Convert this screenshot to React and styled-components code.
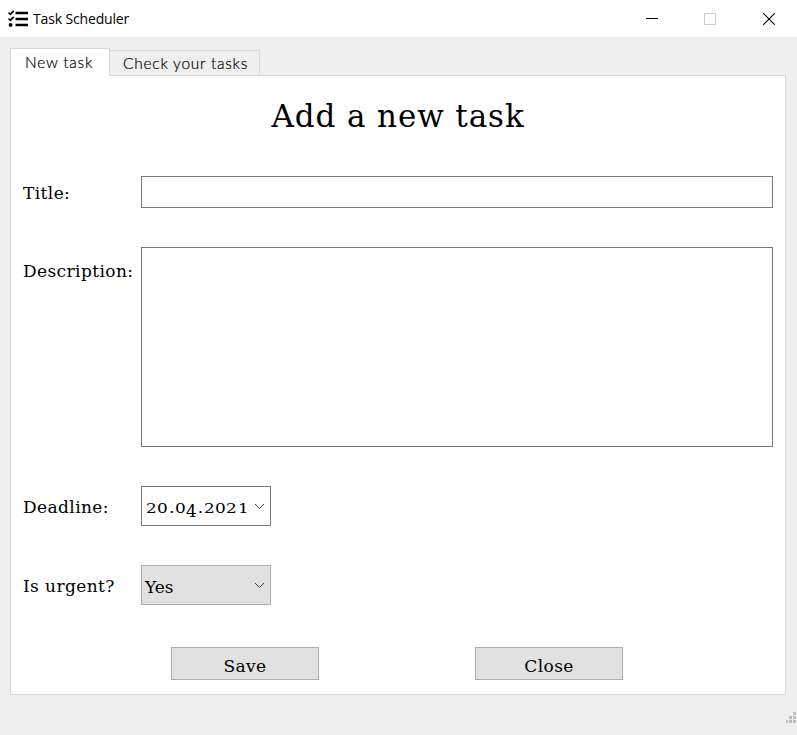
import React from "react";
import styled, { createGlobalStyle } from "styled-components";

const serif = '"DejaVu Serif", serif';

const GlobalStyle = createGlobalStyle`
  * { box-sizing: border-box; }
  body { margin: 0; background: #efefef; }
  button, input, textarea { font: inherit; color: inherit; border-radius: 0; margin: 0; }
`;

const Window = styled.div`
  width: 797px;
  height: 735px;
  display: flex;
  flex-direction: column;
  background: #efefef;
  color: #000;
  overflow: hidden;
`;

const TitleBar = styled.header`
  height: 37px;
  flex: none;
  display: flex;
  align-items: center;
  padding-left: 8px;
  background: #fff;
`;

const AppName = styled.span`
  flex: 1;
  margin-left: 5px;
  font: 14px/20px "Open Sans", sans-serif;
  letter-spacing: ${(p) => p.$spacing}px;
  white-space: nowrap;
`;

const WindowControls = styled.div`
  display: flex;
  gap: 46px;
  padding-right: 22px;
`;

const Icon = styled.svg`
  display: block;
  flex: none;
`;

const Tabs = styled.nav`
  height: 28px;
  margin: 11px 0 -1px 10px;
  flex: none;
  display: flex;
  align-items: flex-start;
  z-index: 1;
`;

const Tab = styled.button`
  width: ${(p) => (p.$active ? 100 : 151)}px;
  height: ${(p) => (p.$active ? 28 : 26)}px;
  margin: ${(p) => (p.$active ? "0" : "2px 0 0 -1px")};
  padding: 0 0 0 ${(p) => (p.$active ? 14 : 13)}px;
  border: 1px solid #d9d9d9;
  border-bottom-color: ${(p) => (p.$active ? "#fff" : "#d9d9d9")};
  border-bottom-width: ${(p) => (p.$active ? 0 : 1)}px;
  background: ${(p) => (p.$active ? "#fff" : "#efefef")};
  text-align: left;
  white-space: nowrap;
  && {
    font: 300 15.5px/${(p) => (p.$active ? 25 : 24)}px Lato, sans-serif;
    letter-spacing: ${(p) => p.$spacing}px;
    -webkit-text-stroke: 0.2px #000;
  }
`;

const Panel = styled.main`
  width: 776px;
  height: 620px;
  margin: 0 0 0 10px;
  flex: none;
  padding: 15px 12px 0;
  border: 1px solid #d9d9d9;
  background: #fff;
  font: 17px/24px ${serif};
`;

const Heading = styled.h1`
  margin: 0;
  height: 50px;
  text-align: center;
  font: 400 31px/50px ${serif};
  letter-spacing: 0.9px;
`;

const Form = styled.form`
  display: grid;
  grid-template-columns: 118px 632px;
  grid-template-rows: 32px 200px 40px 40px;
  row-gap: 39px;
  margin-top: 35px;
`;

const Label = styled.label`
  padding-top: ${(p) => p.$top}px;
  letter-spacing: ${(p) => p.$spacing}px;
  white-space: nowrap;
`;

const TextInput = styled.input`
  width: 100%;
  height: 100%;
  border: 1px solid #7a7a7a;
  background: #fff;
  outline: none;
`;

const TextArea = styled.textarea`
  display: block;
  width: 100%;
  height: 100%;
  border: 1px solid #7a7a7a;
  background: #fff;
  resize: none;
  outline: none;
`;

const Picker = styled.div`
  width: 130px;
  height: 40px;
  display: flex;
  align-items: center;
  justify-content: space-between;
  padding: 0 5px 0 ${(p) => (p.$filled ? 3 : 4)}px;
  border: 1px solid ${(p) => (p.$filled ? "#adadad" : "#7a7a7a")};
  background: ${(p) => (p.$filled ? "#e1e1e1" : "#fff")};
`;

const PickerValue = styled.span`
  padding-top: 3px;
`;

const DateText = styled.span`
  display: flex;
  align-items: baseline;
  width: 103px;
  justify-content: space-between;
  padding-top: 3px;
  line-height: 24px;
  white-space: nowrap;
`;

const OldStyleDigit = styled.span`
  display: inline-block;
  width: 11px;
  text-align: center;
  font-size: 13px;
  transform: translateY(${(p) => (p.$low ? 3 : 0)}px) scale(1.3, ${(p) => (p.$low ? 1.3 : 1)});
`;

const Actions = styled.div`
  display: flex;
  gap: 156px;
  margin: 42px 0 0 148px;
`;

const Button = styled.button`
  width: 148px;
  height: 33px;
  padding: 4px 0 0;
  border: 1px solid #adadad;
  background: #e1e1e1;
  && { letter-spacing: ${(p) => p.$spacing}px; }
`;

const Footer = styled.footer`
  flex: 1;
  display: flex;
  justify-content: flex-end;
  align-items: flex-end;
  padding: 0 1px 12px 0;
`;

const TaskIcon = () => (
  <Icon width="20" height="18" viewBox="0 0 20 18" fill="none" stroke="#000">
    <path d="M7.5 3H20M7.5 9H20M7.5 15H20" strokeWidth="2.5" />
    <path d="M.5 2.6 2.3 4.3 5.7.9M.5 8.6 2.3 10.3 5.7 6.9" strokeWidth="1.8" />
    <circle cx="2.6" cy="15" r="1.9" fill="#000" stroke="none" />
  </Icon>
);

const Chevron = () => (
  <Icon width="11" height="7" viewBox="0 0 11 7" fill="none" stroke="#444">
    <path d="M1 1 5.5 5.5 10 1" />
  </Icon>
);

const Grip = () => (
  <Icon width="10" height="11" fill="#bfbfbf" shapeRendering="crispEdges">
    <path d="M7 0h3v3H7zM3 4h3v3H3zM7 4h3v3H7zM0 8h2v3H0zM3 8h3v3H3zM7 8h3v3H7z" />
  </Icon>
);

export default function App() {
  return (
    <>
      <GlobalStyle />
      <Window>
        <TitleBar>
          <TaskIcon />
          <AppName $spacing={-0.15}>Task Scheduler</AppName>
          <WindowControls>
            <Icon width="12" height="12" shapeRendering="crispEdges"><path d="M0 5h12v1H0z" /></Icon>
            <Icon width="12" height="12" fill="none" stroke="#ccc"><path d="M.5.5h11v11H.5z" /></Icon>
            <Icon width="13" height="12" fill="none" stroke="#000" strokeWidth="1.1"><path d="M1.2.2 12.8 11.8M12.8.2 1.2 11.8" /></Icon>
          </WindowControls>
        </TitleBar>
        <Tabs>
          <Tab $active $spacing={0.75}>New task</Tab>
          <Tab $spacing={0.75}>Check your tasks</Tab>
        </Tabs>
        <Panel>
          <Heading>Add a new task</Heading>
          <Form>
            <Label $top={5} $spacing={0.4}>Title:</Label>
            <TextInput aria-label="Title" />
            <Label $top={12} $spacing={0.4}>Description:</Label>
            <TextArea aria-label="Description" />
            <Label $top={9} $spacing={0.4}>Deadline:</Label>
            <Picker>
              <DateText>
                {[..."20.04.2021"].map((c, i) =>
                  c === "." ? <span key={i}>.</span> : <OldStyleDigit key={i} $low={c === "4"}>{c}</OldStyleDigit>
                )}
              </DateText>
              <Chevron />
            </Picker>
            <Label $top={9} $spacing={0.4}>Is urgent?</Label>
            <Picker $filled>
              <PickerValue>Yes</PickerValue>
              <Chevron />
            </Picker>
          </Form>
          <Actions>
            <Button $spacing={0.4}>Save</Button>
            <Button $spacing={0.4}>Close</Button>
          </Actions>
        </Panel>
        <Footer><Grip /></Footer>
      </Window>
    </>
  );
}
